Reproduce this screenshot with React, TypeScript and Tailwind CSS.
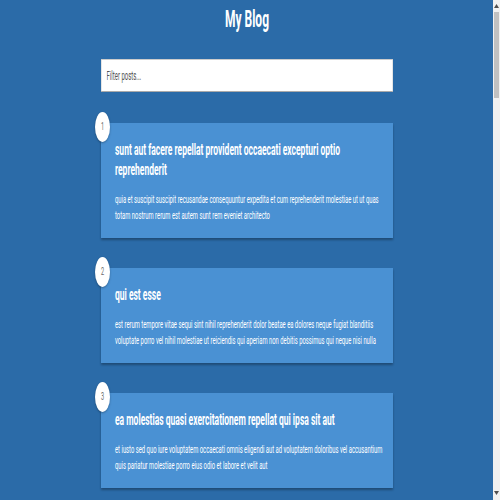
import React, { useState } from 'react';

interface Post {
  id: number;
  title: string;
  body: string;
}

const posts: Post[] = [
  { id: 1, title: 'sunt aut facere repellat provident occaecati excepturi optio reprehenderit', body: 'quia et suscipit suscipit recusandae consequuntur expedita et cum reprehenderit molestiae ut ut quas totam nostrum rerum est autem sunt rem eveniet architecto' },
  { id: 2, title: 'qui est esse', body: 'est rerum tempore vitae sequi sint nihil reprehenderit dolor beatae ea dolores neque fugiat blanditiis voluptate porro vel nihil molestiae ut reiciendis qui aperiam non debitis possimus qui neque nisi nulla' },
  { id: 3, title: 'ea molestias quasi exercitationem repellat qui ipsa sit aut', body: 'et iusto sed quo iure voluptatem occaecati omnis eligendi aut ad voluptatem doloribus vel accusantium quis pariatur molestiae porro eius odio et labore et velit aut' },
  { id: 4, title: 'eum et est occaecati', body: 'ullam et saepe reiciendis voluptatem adipisci sit amet autem assumenda provident rerum culpa quis hic commodi nesciunt rem tenetur doloremque ipsam iure quis sunt voluptatem rerum illo velit' },
  { id: 5, title: 'nesciunt quas odio', body: 'repudiandae veniam quaerat sunt sed alias aut fugiat sit autem sed est voluptatem omnis possimus esse voluptatibus quis est aut tenetur dolor neque' },
  { id: 6, title: 'dolorem eum magni eos aperiam quia', body: 'ut aspernatur corporis harum nihil quis provident sequi mollitia nobis aliquid molestiae perspiciatis et ea nemo ab reprehenderit accusantium quas voluptate dolores velit et doloremque molestiae' },
  { id: 7, title: 'magnam facilis autem', body: 'dolore placeat quibusdam ea quo vitae magni quis enim qui quis quo nemo aut saepe quidem repellat excepturi ut quia sunt ut sequi eos ea sed quas' },
  { id: 8, title: 'dolorem dolore est ipsam', body: 'dignissimos aperiam dolorem qui eum facilis quibusdam animi sint suscipit qui sint possimus cum quaerat magni maiores excepturi ipsam ut commodi dolor voluptatum modi aut vitae' },
  { id: 9, title: 'nesciunt iure omnis dolorem tempora et accusantium', body: 'consectetur animi nesciunt iure dolore enim quia ad veniam autem ut quam aut nobis et est aut quod aut provident voluptas autem voluptas' },
  { id: 10, title: 'optio molestias id quia eum', body: 'quo et expedita modi cum officia vel magni doloribus qui repudiandae vero nisi sit quos veniam quod sed accusamus veritatis error' },
  { id: 11, title: 'et ea vero quia laudantium autem', body: 'delectus reiciendis molestiae occaecati non minima eveniet qui voluptatibus accusamus in eum beatae sit vel qui neque voluptates ut commodi qui incidunt ut animi commodi' },
  { id: 12, title: 'in quibusdam tempore odit est dolorem', body: 'itaque id aut magnam praesentium quia et ea odit et ea voluptas et sapiente quia nihil amet occaecati quia id voluptatem incidunt ea est distinctio odio' },
  { id: 13, title: 'dolorum ut in voluptas mollitia et saepe quo animi', body: 'aut dicta possimus sint mollitia voluptas commodi quo doloremque iste corrupti reiciendis voluptatem eius rerum sit cumque quod eligendi laborum minima perferendis recusandae assumenda consectetur porro architecto ipsum ipsam' },
  { id: 14, title: 'voluptatem eligendi optio', body: 'fuga et accusamus dolorum perferendis illo voluptas non doloremque neque facere ad qui dolorum molestiae beatae sed aut voluptas totam sit illum' },
  { id: 15, title: 'eveniet quod temporibus', body: 'reprehenderit quos placeat velit minima officia dolores impedit repudiandae molestiae nam voluptas recusandae quis delectus officiis harum fugiat vitae' },
  { id: 16, title: 'sint suscipit perspiciatis velit dolorum rerum ipsa laboriosam odio', body: 'suscipit nam nisi quo aperiam aut asperiores eos fugit maiores voluptatibus quia voluptatem quis ullam qui in alias quia est consequatur magni mollitia accusamus ea nisi voluptate dicta' },
  { id: 17, title: 'fugit voluptas sed molestias voluptatem provident', body: 'eos voluptas et aut odit natus earum aspernatur fuga molestiae ullam deserunt ratione qui eos qui nihil ratione nemo velit ut aut id quo' },
  { id: 18, title: 'voluptate et itaque vero tempora molestiae', body: 'eveniet quo quis laborum totam consequatur non dolor ut et est repudiandae est voluptatem vel debitis et magnam' },
  { id: 19, title: 'adipisci placeat illum aut reiciendis qui', body: 'illum quis cupiditate provident sit magnam ea sed aut omnis veniam maiores ullam consequatur atque adipisci quo iste expedita sit quos voluptas' },
  { id: 20, title: 'doloribus ad provident suscipit at', body: 'qui consequuntur ducimus possimus quisquam amet similique suscipit porro ipsam amet eos veritatis officiis exercitationem vel fugit aut necessitatibus totam omnis rerum consequatur expedita quidem cumque explicabo' },
];

const PostCard: React.FC<{ post: Post }> = ({ post }) => (
  <div className="relative bg-[#4a91d3] pl-[28px] pr-[14px] pt-[16px] pb-[15px] shadow-[0_2px_3px_rgba(0,0,0,0.3)]">
    {/* number badge */}
    <div className="absolute -top-[11px] -left-[12px] w-[30px] h-[30px] rounded-full bg-white flex items-center justify-center text-[11px] text-[#666] shadow-[0_1px_3px_rgba(0,0,0,0.3)]">
      {post.id}
    </div>
    <h2 className="text-[17px] leading-[20px] font-bold text-white">{post.title}</h2>
    <p className="mt-[12px] text-[11.7px] leading-[16px] text-white">{post.body}</p>
  </div>
);

// window scrollbar, drawn since the capture hides the native one
const Scrollbar: React.FC = () => (
  <div className="fixed top-0 right-0 h-screen w-[7px] bg-[#f1f1f1] flex flex-col items-center">
    <div className="h-[12px] flex items-center justify-center">
      <svg width="5" height="4" viewBox="0 0 5 4" aria-hidden="true">
        <polygon points="2.5,0 5,4 0,4" fill="#505050" />
      </svg>
    </div>
    <div className="w-[5px] h-[86px] bg-[#c1c1c1]" />
    <div className="flex-1" />
    <div className="h-[14px] flex items-center justify-center">
      <svg width="5" height="4" viewBox="0 0 5 4" aria-hidden="true">
        <polygon points="0,0 5,0 2.5,4" fill="#505050" />
      </svg>
    </div>
  </div>
);

export default function App() {
  const [filter, setFilter] = useState('');
  const shown = posts.filter(
    (p) => p.title.includes(filter) || p.body.includes(filter)
  );

  return (
    <div className="w-full min-h-screen overflow-x-clip bg-[#2b6ba8]" style={{ fontFamily: 'Roboto, "Liberation Sans", sans-serif' }}>
      {/* page is drawn condensed horizontally */}
      <div className="w-[988px] origin-top-left scale-x-[0.5] pb-[30px]">
        <h1 className="pt-[3px] text-center text-[24px] leading-[32px] font-bold text-white">My Blog</h1>
        <div className="w-[584px] mx-auto mt-[24px]">
          <input
            type="text"
            placeholder="Filter posts..."
            value={filter}
            onChange={(e) => setFilter(e.target.value)}
            className="w-full h-[33px] px-[10px] bg-white border border-[#ccc] border-b-[#aaa] text-[12px] text-[#333] placeholder-[#555] outline-none"
          />
          <div className="mt-[31px] flex flex-col gap-[30px]">
            {shown.map((p) => (
              <PostCard key={p.id} post={p} />
            ))}
          </div>
        </div>
      </div>
      <Scrollbar />
    </div>
  );
}
